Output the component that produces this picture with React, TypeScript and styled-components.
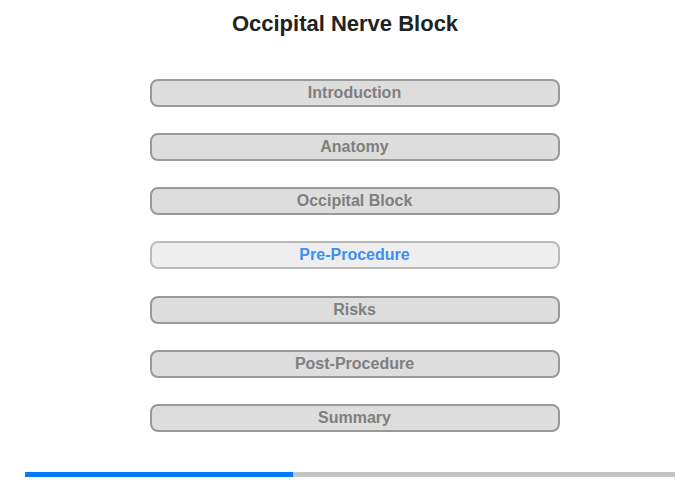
import React from "react";
import styled, { createGlobalStyle } from "styled-components";

const Global = createGlobalStyle`
  html, body { margin: 0; padding: 0; background: #fff; }
  body { font-family: "Liberation Sans", Arial, sans-serif; }
`;

const Page = styled.div`
  width: 700px;
  height: 480px;
  display: flex;
  flex-direction: column;
  align-items: center;
  box-sizing: border-box;
  padding-top: 11px;
`;

const Title = styled.h1`
  margin: 0 10px 0 0;
  font-size: 22px;
  line-height: 25px;
  font-weight: bold;
  color: #222;
`;

const Menu = styled.div`
  display: flex;
  flex-direction: column;
  gap: 26.17px;
  margin-top: 43px;
  margin-left: 9px;
`;

const Item = styled.div<{ $active?: boolean }>`
  width: 410px;
  height: 28px;
  box-sizing: border-box;
  border: 2px solid ${(p) => (p.$active ? "#bbbbbb" : "#999999")};
  background: ${(p) => (p.$active ? "#eeeeee" : "#dddddd")};
  border-radius: 8px;
  display: flex;
  align-items: center;
  justify-content: center;
  font-size: 16px;
  font-weight: bold;
  color: ${(p) => (p.$active ? "#3d8ef5" : "#7f7f7f")};
`;

const Progress = styled.div`
  margin-top: auto;
  margin-bottom: 3px;
  width: 650px;
  height: 5px;
  background: #c3c3c3;
  display: flex;
`;

const Fill = styled.div`
  height: 100%;
  background: #007bff;
`;

const items = [
  "Introduction",
  "Anatomy",
  "Occipital Block",
  "Pre-Procedure",
  "Risks",
  "Post-Procedure",
  "Summary",
];

export default function App() {
  return (
    <Page>
      <Global />
      <Title>Occipital Nerve Block</Title>
      <Menu>
        {items.map((t) => (
          <Item key={t} $active={t === "Pre-Procedure"}>
            {t}
          </Item>
        ))}
      </Menu>
      <Progress>
        <Fill style={{ width: `${(268 / 650) * 100}%` }} />
      </Progress>
    </Page>
  );
}
